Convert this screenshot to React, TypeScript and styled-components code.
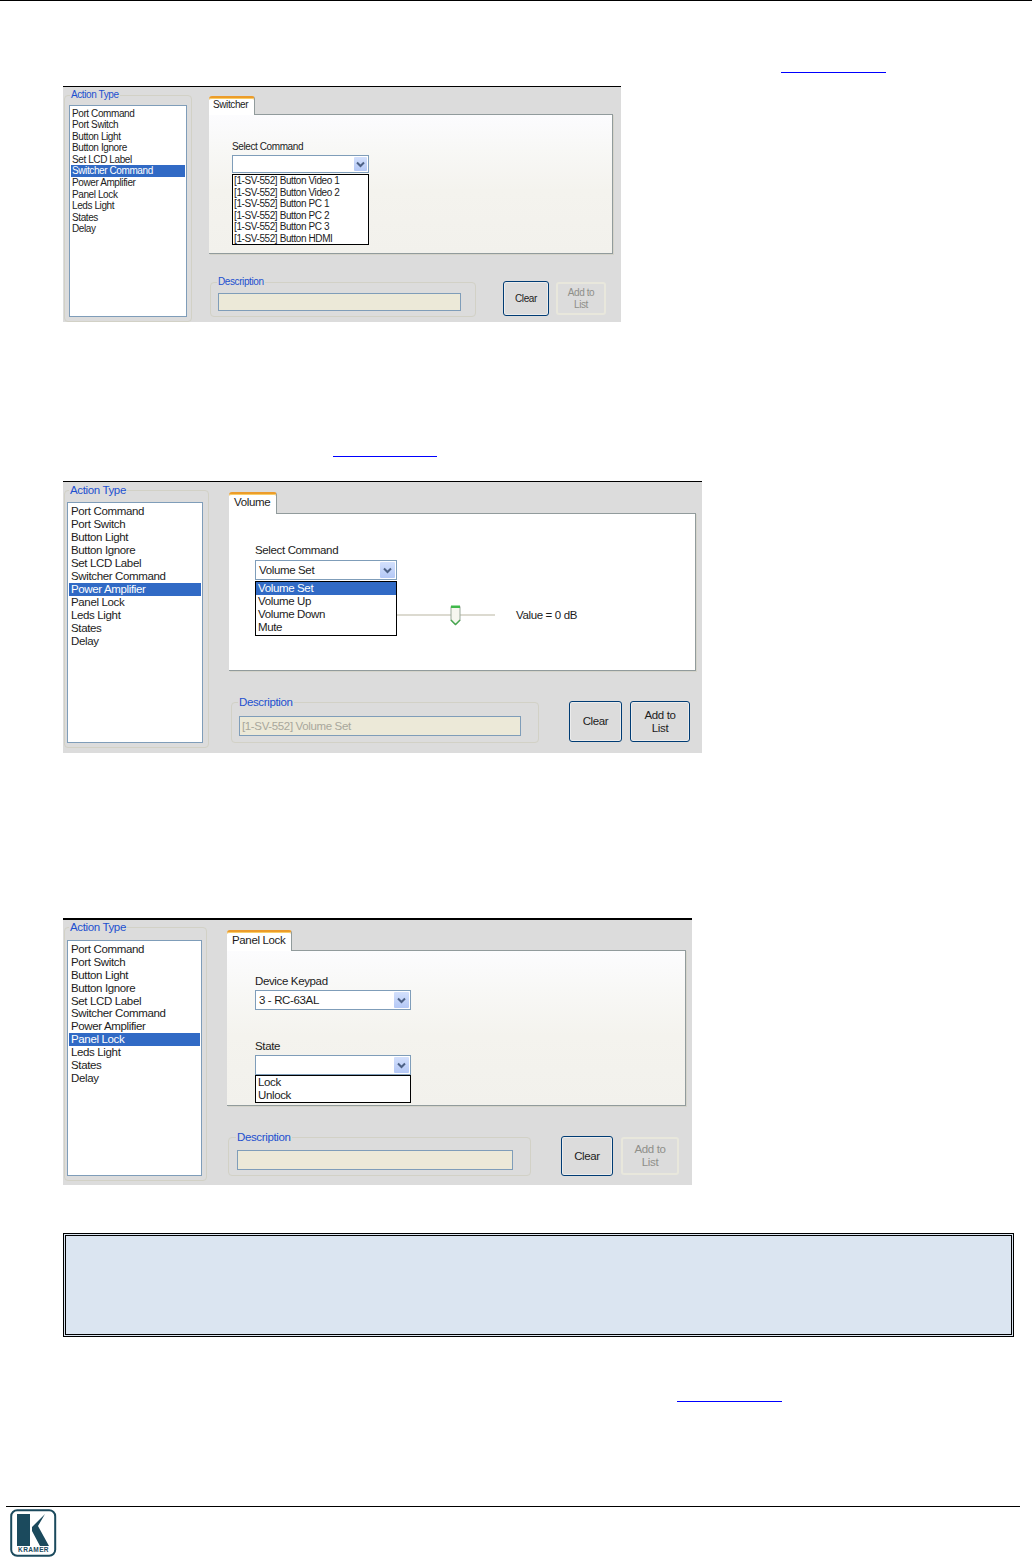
import React from "react";
import styled, { createGlobalStyle, ThemeProvider } from "styled-components";

const GlobalStyle = createGlobalStyle`
  * { box-sizing: border-box; }
  html, body { margin: 0; padding: 0; background: #fff; }
  body { font-family: "Liberation Sans", Arial, sans-serif; }
`;

interface ShotMetrics {
  font: number;
  spacing: number;
  ruleHeight: number;
  width: number;
  height: number;
  groupTop: number;
  groupWidth: number;
  groupPadLeft: number;
  legendShift: number;
  listPadTop: number;
  listWidth: number;
  listHeight: number;
  listInset: number;
  listLead: number;
  itemPad: number;
  row: number;
  legend: number;
  columnGap: number;
  columnTop: number;
  tabWidth: number;
  tabHeight: number;
  tabPad: number;
  panelWidth: number;
  panelHeight: number;
  panelPadTop: number;
  panelPadLeft: number;
  panelBg: string;
  labelGap: number;
  comboHeight: number;
  comboButton: number;
  descTop: number;
  descLeft: number;
  descWidth: number;
  descPad: number;
  descPadTop: number;
  descPadBottom: number;
  inputWidth: number;
  inputHeight: number;
  buttonGap: number;
  buttonsApart: number;
}

const softPanel = "linear-gradient(#fcfcfe 0%, #f8f8f6 25%, #f4f3ee 55%, #f2f1ec 100%)";

const switcherShot: ShotMetrics = {
  font: 10,
  spacing: -0.4,
  ruleHeight: 1,
  width: 558,
  height: 236,
  groupTop: 2,
  groupWidth: 128,
  groupPadLeft: 4,
  legendShift: 1,
  listPadTop: 4,
  listWidth: 118,
  listHeight: 212,
  listInset: 1,
  listLead: 1.5,
  itemPad: 1,
  row: 11.6,
  legend: 12,
  columnGap: 17,
  columnTop: 7,
  tabWidth: 46,
  tabHeight: 18,
  tabPad: 4,
  panelWidth: 404,
  panelHeight: 140,
  panelPadTop: 26,
  panelPadLeft: 23,
  panelBg: softPanel,
  labelGap: 2,
  comboHeight: 18,
  comboButton: 13,
  descTop: 22,
  descLeft: 1,
  descWidth: 266,
  descPad: 7,
  descPadTop: 5,
  descPadBottom: 5,
  inputWidth: 243,
  inputHeight: 18,
  buttonGap: 27,
  buttonsApart: 7,
};

const volumeShot: ShotMetrics = {
  font: 11.5,
  spacing: -0.36,
  ruleHeight: 1,
  width: 639,
  height: 272,
  groupTop: 2,
  groupWidth: 145,
  groupPadLeft: 2,
  legendShift: 2,
  listPadTop: 5,
  listWidth: 136,
  listHeight: 241,
  listInset: 1,
  listLead: 1.5,
  itemPad: 2,
  row: 13.1,
  legend: 13,
  columnGap: 20,
  columnTop: 8,
  tabWidth: 48,
  tabHeight: 21,
  tabPad: 5,
  panelWidth: 467,
  panelHeight: 158,
  panelPadTop: 30,
  panelPadLeft: 26,
  panelBg: "#fff",
  labelGap: 4,
  comboHeight: 20,
  comboButton: 15,
  descTop: 25,
  descLeft: 2,
  descWidth: 308,
  descPad: 7,
  descPadTop: 7,
  descPadBottom: 6,
  inputWidth: 282,
  inputHeight: 20,
  buttonGap: 30,
  buttonsApart: 8,
};

const panelLockShot: ShotMetrics = {
  font: 11.5,
  spacing: -0.36,
  ruleHeight: 2,
  width: 629,
  height: 267,
  groupTop: 1,
  groupWidth: 143,
  groupPadLeft: 2,
  legendShift: 2,
  listPadTop: 6,
  listWidth: 135,
  listHeight: 236,
  listInset: 1,
  listLead: 2,
  itemPad: 2,
  row: 12.9,
  legend: 13,
  columnGap: 20,
  columnTop: 9,
  tabWidth: 65,
  tabHeight: 20,
  tabPad: 5,
  panelWidth: 459,
  panelHeight: 156,
  panelPadTop: 24,
  panelPadLeft: 28,
  panelBg: softPanel,
  labelGap: 3,
  comboHeight: 20,
  comboButton: 15,
  descTop: 25,
  descLeft: 1,
  descWidth: 303,
  descPad: 8,
  descPadTop: 6,
  descPadBottom: 5,
  inputWidth: 276,
  inputHeight: 20,
  buttonGap: 30,
  buttonsApart: 8,
};

type Themed = { theme: ShotMetrics };
const m = (pick: (t: ShotMetrics) => number | string) => ({ theme }: Themed) => pick(theme);

const Page = styled.div`
  width: 1032px;
  height: 1557px;
  overflow: hidden;
  display: flex;
  flex-direction: column;
  background: #fff;
`;

const TopRule = styled.div`
  flex: none;
  height: 1px;
  background: #000;
`;

const LinkRule = styled.div<{ $top: number; $left: number; $width: number }>`
  flex: none;
  height: 1px;
  margin-top: ${(p) => p.$top}px;
  margin-left: ${(p) => p.$left}px;
  width: ${(p) => p.$width}px;
  background: #0000ff;
`;

const Window = styled.div<{ $top: number }>`
  margin-top: ${(p) => p.$top}px;
  margin-left: 63px;
  flex: none;
  width: ${m((t) => t.width)}px;
  height: ${m((t) => t.height)}px;
  border-top: ${m((t) => t.ruleHeight)}px solid #000;
  background: #dcdcdc;
  padding-left: 1px;
  padding-top: ${m((t) => t.groupTop)}px;
  display: flex;
  align-items: flex-start;
  font-size: ${m((t) => t.font)}px;
  letter-spacing: ${m((t) => t.spacing)}px;
  color: #1c1c1c;
`;

const GroupBox = styled.fieldset`
  margin: 0;
  flex: none;
  border: 1px solid #d2d1c6;
  border-radius: 4px;
`;

const GroupTitle = styled.legend`
  padding: 0 1px;
  height: ${m((t) => t.legend)}px;
  line-height: ${m((t) => t.legend)}px;
  color: #1c50cf;
`;

const ActionTitle = styled(GroupTitle)`
  margin-left: ${m((t) => t.legendShift)}px;
`;

const DescriptionTitle = styled(GroupTitle)`
  margin-left: -1px;
`;

const ActionGroup = styled(GroupBox)`
  width: ${m((t) => t.groupWidth)}px;
  padding: ${m((t) => t.listPadTop)}px 0 4px ${m((t) => t.groupPadLeft)}px;
`;

const ActionList = styled.ul`
  list-style: none;
  margin: 0;
  width: ${m((t) => t.listWidth)}px;
  height: ${m((t) => t.listHeight)}px;
  padding: ${m((t) => t.listLead)}px ${m((t) => t.listInset)}px;
  background: #fff;
  border: 1px solid #7f9db9;
`;

const ActionItem = styled.li<{ $selected?: boolean }>`
  height: ${m((t) => t.row)}px;
  line-height: ${m((t) => t.row)}px;
  padding-left: ${m((t) => t.itemPad)}px;
  white-space: nowrap;
  background: ${(p) => (p.$selected ? "#316ac5" : "transparent")};
  color: ${(p) => (p.$selected ? "#fff" : "inherit")};
`;

const Column = styled.div`
  flex: none;
  margin-left: ${m((t) => t.columnGap)}px;
  padding-top: ${m((t) => t.columnTop)}px;
`;

const TabRow = styled.div`
  display: flex;
  height: ${m((t) => t.tabHeight)}px;
`;

const Tab = styled.div`
  position: relative;
  z-index: 1;
  width: ${m((t) => t.tabWidth)}px;
  height: ${m((t) => Number(t.tabHeight) + 1)}px;
  line-height: ${m((t) => Number(t.tabHeight) - 4)}px;
  padding-left: ${m((t) => t.tabPad)}px;
  background: #fff;
  border-top: 2px solid #ec9c2a;
  border-right: 1px solid #919b9c;
  border-radius: 3px 3px 0 0;
  box-shadow: inset 0 1px 0 #f9cc66;
`;

const TabPanel = styled.div`
  width: ${m((t) => t.panelWidth)}px;
  height: ${m((t) => t.panelHeight)}px;
  padding: ${m((t) => t.panelPadTop)}px 0 0 ${m((t) => t.panelPadLeft)}px;
  background: ${m((t) => t.panelBg)};
  border: 1px solid #919b9c;
  border-left: 0;
  box-shadow: 1px 1px 0 #d4d3ca;
`;

const Field = styled.div<{ $gap?: number }>`
  margin-top: ${(p) => p.$gap ?? 0}px;
`;

const FieldLabel = styled.div`
  height: 12px;
  line-height: 12px;
  margin-bottom: ${m((t) => t.labelGap)}px;
`;

const Combo = styled.div<{ $width: number }>`
  position: relative;
  z-index: 2;
  width: ${(p) => p.$width}px;
  height: ${m((t) => t.comboHeight)}px;
  display: flex;
  align-items: stretch;
  background: #fff;
  border: 1px solid #7f9db9;
`;

const ComboValue = styled.div`
  flex: 1;
  padding-left: 3px;
  line-height: ${m((t) => Number(t.comboHeight) - 2)}px;
  white-space: nowrap;
`;

const ComboButton = styled.div`
  flex: none;
  width: ${m((t) => t.comboButton)}px;
  margin: 1px;
  display: flex;
  align-items: center;
  justify-content: center;
  background: linear-gradient(#d3e0fc, #b4c8f6);
  border-radius: 1px;
`;

const DropList = styled.ul<{ $height: number; $offset: number }>`
  position: absolute;
  left: -1px;
  right: -1px;
  top: calc(100% + ${(p) => p.$offset}px);
  height: ${(p) => p.$height}px;
  margin: 0;
  padding: 0;
  list-style: none;
  background: #fff;
  border: 1px solid #000;
`;

const DropItem = styled.li<{ $selected?: boolean }>`
  height: ${m((t) => t.row)}px;
  line-height: ${m((t) => t.row)}px;
  padding-left: ${m((t) => t.itemPad)}px;
  white-space: nowrap;
  background: ${(p) => (p.$selected ? "#316ac5" : "transparent")};
  color: ${(p) => (p.$selected ? "#fff" : "inherit")};
`;

const SliderRow = styled.div`
  display: flex;
  align-items: center;
  height: 14px;
  margin-top: 28px;
`;

const SliderTrack = styled.div`
  position: relative;
  width: 240px;
  height: 2px;
  background: #dcdad0;
`;

const SliderThumb = styled.svg`
  position: absolute;
  left: 195px;
  top: -9px;
`;

const SliderValue = styled.div`
  margin-left: 21px;
`;

const BottomRow = styled.div`
  display: flex;
  align-items: flex-start;
  margin-top: ${m((t) => t.descTop)}px;
  padding-left: ${m((t) => t.descLeft)}px;
`;

const DescriptionGroup = styled(GroupBox)`
  width: ${m((t) => t.descWidth)}px;
  padding: ${m((t) => t.descPadTop)}px 0 ${m((t) => t.descPadBottom)}px ${m((t) => t.descPad)}px;
`;

const DescriptionInput = styled.div`
  width: ${m((t) => t.inputWidth)}px;
  height: ${m((t) => t.inputHeight)}px;
  line-height: ${m((t) => Number(t.inputHeight) - 2)}px;
  padding-left: 2px;
  background: #ece9d8;
  border: 1px solid #7f9db9;
  color: #a8a79c;
  white-space: nowrap;
`;

const Buttons = styled.div`
  display: flex;
  align-items: flex-start;
  margin-left: ${m((t) => t.buttonGap)}px;
  gap: ${m((t) => t.buttonsApart)}px;
`;

const ActionButton = styled.div<{ $width: number; $height: number; $top: number; $off?: boolean }>`
  width: ${(p) => p.$width}px;
  height: ${(p) => p.$height}px;
  margin-top: ${(p) => p.$top}px;
  display: flex;
  align-items: center;
  justify-content: center;
  text-align: center;
  line-height: 1.12;
  background: #dcdcdc;
  border: ${(p) => (p.$off ? "2px solid #e8e7dc" : "1px solid #003c74")};
  border-radius: 3px;
  color: ${(p) => (p.$off ? "#8f8f8a" : "inherit")};
  box-shadow: ${(p) => (p.$off ? "none" : "inset 0 0 0 1px #ececec")};
`;

const NoteBox = styled.div`
  margin: 48px 0 0 63px;
  flex: none;
  width: 951px;
  height: 104px;
  background: #dbe5f1;
  border: 3px double #000;
`;

const FooterRule = styled.div`
  flex: none;
  margin: 104px 0 0 6px;
  width: 1014px;
  height: 1px;
  background: #000;
`;

const LogoWrap = styled.div`
  flex: none;
  margin: 2px 0 0 10px;
  height: 48px;
`;

const ACTIONS = [
  "Port Command",
  "Port Switch",
  "Button Light",
  "Button Ignore",
  "Set LCD Label",
  "Switcher Command",
  "Power Amplifier",
  "Panel Lock",
  "Leds Light",
  "States",
  "Delay",
];

const Chevron = () => (
  <svg width="9" height="7" viewBox="0 0 9 7">
    <path d="M1 1.5 L4.5 5 L8 1.5" fill="none" stroke="#4d6185" strokeWidth="2" />
  </svg>
);

const ThumbIcon = () => (
  <SliderThumb width="11" height="21" viewBox="0 0 11 21">
    <path d="M1 1.5 H10 V15.5 L5.5 20 L1 15.5 Z" fill="#f6f6ef" stroke="#9aa89a" />
    <rect x="1" y="0.5" width="9" height="2.5" fill="#3fb84a" />
    <path d="M1 15 L5.5 19.5 L10 15" fill="none" stroke="#45a84f" strokeWidth="1.4" />
  </SliderThumb>
);

const Logo = () => (
  <svg width="47" height="48" viewBox="0 0 47 48">
    <rect x="1.2" y="1.2" width="44" height="45.5" rx="6" fill="#fff" stroke="#1b4a5d" strokeWidth="2" />
    <rect x="7" y="5" width="13" height="32" fill="#1b4a5d" />
    <polygon points="22,18 35,5 28,17 39,37 30,37 22,22" fill="#1b4a5d" />
    <text x="23.5" y="43" textAnchor="middle" fontFamily="Liberation Sans, sans-serif" fontSize="6.5" fontWeight="700" letterSpacing="0.4" fill="#1b4a5d">
      KRAMER
    </text>
  </svg>
);

interface ShotProps {
  metrics: ShotMetrics;
  top: number;
  selected: string;
  tab: string;
  description?: string;
  clear: { width: number; height: number; top: number };
  add: { width: number; height: number; top: number; off?: boolean };
  children: React.ReactNode;
}

const ActionShot = ({ metrics, top, selected, tab, description, clear, add, children }: ShotProps) => (
  <ThemeProvider theme={metrics}>
    <Window $top={top}>
      <ActionGroup>
        <ActionTitle>Action Type</ActionTitle>
        <ActionList>
          {ACTIONS.map((name) => (
            <ActionItem key={name} $selected={name === selected}>
              {name}
            </ActionItem>
          ))}
        </ActionList>
      </ActionGroup>
      <Column>
        <TabRow>
          <Tab>{tab}</Tab>
        </TabRow>
        <TabPanel>{children}</TabPanel>
        <BottomRow>
          <DescriptionGroup>
            <DescriptionTitle>Description</DescriptionTitle>
            <DescriptionInput>{description}</DescriptionInput>
          </DescriptionGroup>
          <Buttons>
            <ActionButton $width={clear.width} $height={clear.height} $top={clear.top}>
              Clear
            </ActionButton>
            <ActionButton $width={add.width} $height={add.height} $top={add.top} $off={add.off}>
              Add to
              <br />
              List
            </ActionButton>
          </Buttons>
        </BottomRow>
      </Column>
    </Window>
  </ThemeProvider>
);

const SWITCHER_COMMANDS = ["Button Video 1", "Button Video 2", "Button PC 1", "Button PC 2", "Button PC 3", "Button HDMI"];

const App = () => (
  <Page>
    <GlobalStyle />
    <TopRule />
    <LinkRule $top={71} $left={781} $width={105} />

    <ActionShot
      metrics={switcherShot}
      top={13}
      selected="Switcher Command"
      tab="Switcher"
      clear={{ width: 46, height: 35, top: 5 }}
      add={{ width: 50, height: 33, top: 6, off: true }}
    >
      <Field>
        <FieldLabel>Select Command</FieldLabel>
        <Combo $width={137}>
          <ComboValue />
          <ComboButton>
            <Chevron />
          </ComboButton>
          <DropList $height={71} $offset={2}>
            {SWITCHER_COMMANDS.map((name) => (
              <DropItem key={name}>[1-SV-552] {name}</DropItem>
            ))}
          </DropList>
        </Combo>
      </Field>
    </ActionShot>

    <LinkRule $top={134} $left={333} $width={104} />

    <ActionShot
      metrics={volumeShot}
      top={24}
      selected="Power Amplifier"
      tab="Volume"
      description="[1-SV-552] Volume Set"
      clear={{ width: 53, height: 41, top: 5 }}
      add={{ width: 60, height: 41, top: 5 }}
    >
      <Field>
        <FieldLabel>Select Command</FieldLabel>
        <Combo $width={142}>
          <ComboValue>Volume Set</ComboValue>
          <ComboButton>
            <Chevron />
          </ComboButton>
          <DropList $height={55} $offset={2}>
            <DropItem $selected>Volume Set</DropItem>
            <DropItem>Volume Up</DropItem>
            <DropItem>Volume Down</DropItem>
            <DropItem>Mute</DropItem>
          </DropList>
        </Combo>
      </Field>
      <SliderRow>
        <SliderTrack>
          <ThumbIcon />
        </SliderTrack>
        <SliderValue>Value = 0 dB</SliderValue>
      </SliderRow>
    </ActionShot>

    <ActionShot
      metrics={panelLockShot}
      top={165}
      selected="Panel Lock"
      tab="Panel Lock"
      clear={{ width: 52, height: 40, top: 5 }}
      add={{ width: 58, height: 38, top: 6, off: true }}
    >
      <Field>
        <FieldLabel>Device Keypad</FieldLabel>
        <Combo $width={156}>
          <ComboValue>3 - RC-63AL</ComboValue>
          <ComboButton>
            <Chevron />
          </ComboButton>
        </Combo>
      </Field>
      <Field $gap={30}>
        <FieldLabel>State</FieldLabel>
        <Combo $width={156}>
          <ComboValue />
          <ComboButton>
            <Chevron />
          </ComboButton>
          <DropList $height={28} $offset={1}>
            <DropItem>Lock</DropItem>
            <DropItem>Unlock</DropItem>
          </DropList>
        </Combo>
      </Field>
    </ActionShot>

    <NoteBox />
    <LinkRule $top={64} $left={677} $width={105} />
    <FooterRule />
    <LogoWrap>
      <Logo />
    </LogoWrap>
  </Page>
);

export default App;
